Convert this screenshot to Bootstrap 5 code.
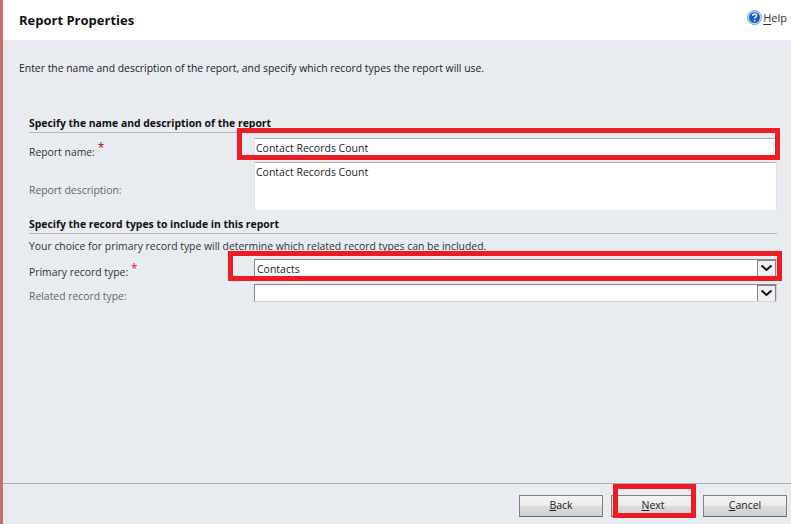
<!DOCTYPE html>
<html lang="en">
<head>
<meta charset="utf-8">
<title>Report Properties</title>
<link rel="stylesheet" href="https://cdn.jsdelivr.net/npm/bootstrap@5.3.0/dist/css/bootstrap.min.css">
<style>
html,body{height:100%;margin:0}
body{background:#e8ebf0;font-family:"Open Sans","Noto Sans",sans-serif;font-size:10.4px;color:#222;overflow:hidden;line-height:15px}
.wiz{height:524px;border-left:3px solid #cf6b6e;position:relative}
.wiz-head{height:40px;background:#fff;padding:0 4px 0 16px}
.wiz-title{font-size:13px;font-weight:700;color:#111;margin:0;line-height:40px}
.help-link{color:#333;text-decoration:none;font-size:11px;margin-top:-6px;gap:1px}
.help-link u{text-underline-offset:2px}
.intro{padding:21px 0 0 16px;height:76px;margin:0}
.form-area{padding:0 14px 0 26px}
.sec-head{font-size:10.4px;font-weight:700;color:#111;border-bottom:1px solid #b5b8bd;height:17px;line-height:15px;margin:0}
.sec-two{margin-top:6px}
.lab{width:225px;flex:none;color:#333}
.lab-a{padding-top:12px}
.lab-b{padding-top:21px}
.lab-c{padding-top:6px}
.lab-d{padding-top:5px}
.lab-dim{color:#666}
.req{color:#b80000;font-size:12px;line-height:11px;margin-left:3px;position:relative;top:-4px}
.req-hot{color:#ee1111;top:-3px}
.fld{flex:1;min-width:0}
.fld-a{padding-top:5px}
.txt.form-control{border-radius:0;border:1px solid;border-color:#abadb3 #e2e3ea #e3e9ef #e2e3ea;padding:1px 0 0 1px;font-size:10.5px;line-height:15px;color:#222;min-height:0;box-shadow:none;background:#fff}
.txt-one{height:18px}
.txt.txt-area{height:49px;resize:none;display:block;padding-top:2px}
.pick{border-radius:0;padding:2px 0 0 2px;font-size:10.5px;line-height:15px;height:18px;min-height:0;color:#222;border:1px solid #d5d5d5;border-top-color:#868686;border-left-color:#868686;display:block;
background:#fff url("data:image/svg+xml,%3Csvg xmlns='http://www.w3.org/2000/svg' width='19' height='17'%3E%3Crect x='.5' y='.5' width='18' height='16' fill='%23f0f0f0' stroke='%23868686'/%3E%3Cpath d='M4.500 5.500l5 4.500 5-4.500' fill='none' stroke='%23111' stroke-width='2'/%3E%3C/svg%3E") no-repeat right 0 top 0;background-size:19px 17px}
.choice-note{padding-top:5px;height:25px;color:#333;margin:0}
.rowline{display:flex}
.row-a{height:23px}
.row-b{height:49px;margin-top:6px}
.row-c{height:18px}
.row-gap-b{margin-top:7px}
.wiz-foot{position:absolute;left:0;right:0;top:483px;border-top:1px solid #aeb2b7;padding:11px 4px 0 0;gap:8px}
.act{width:84px;height:22px;padding:0 0 2px;border-radius:0;font-size:10.5px;line-height:15px;color:#222;border:1px solid #7f7f7f;border-bottom-color:#666;background:linear-gradient(#f3f3f3 0,#ececec 50%,#dddddd 51%,#cfcfcf 100%)}
.mark-box{position:absolute;border:5px solid #ed1c24;pointer-events:none}
.mb-1a{left:234px;top:128px;width:543px;height:32px}
.mb-2a{left:225px;top:251px;width:554px;height:30px}
.mb-3a{left:610px;top:484px;width:83px;height:34px}
</style>
</head>
<body>
<div class="wiz">
  <div class="wiz-head d-flex justify-content-between align-items-center">
    <h1 class="wiz-title">Report Properties</h1>
    <a class="help-link d-flex align-items-center" href="#">
      <svg width="15" height="15" viewBox="0 0 15 15" aria-hidden="true"><circle cx="7.500" cy="7.500" r="7" fill="#cfe0f5" stroke="#6f9bd8"/><circle cx="7.500" cy="7.500" r="5.500" fill="#1f5fc8"/><path d="M5.500 5.800c.2-1.200 1-1.800 2-1.800 1.200 0 2 .7 2 1.700 0 1.500-1.900 1.500-1.900 3" fill="none" stroke="#fff" stroke-width="1.400"/><rect x="6.900" y="10" width="1.400" height="1.500" fill="#fff"/></svg>
      <span><u>H</u>elp</span>
    </a>
  </div>
  <p class="intro">Enter the name and description of the report, and specify which record types the report will use.</p>
  <div class="form-area">
    <h2 class="sec-head">Specify the name and description of the report</h2>
    <div class="rowline row-a">
      <label class="lab lab-a" for="rn">Report name:<span class="req">*</span></label>
      <div class="fld fld-a"><input id="rn" class="form-control txt txt-one" value="Contact Records Count"></div>
    </div>
    <div class="rowline row-b">
      <label class="lab lab-dim lab-b" for="rd">Report description:</label>
      <div class="fld"><textarea id="rd" class="form-control txt txt-area">Contact Records Count</textarea></div>
    </div>
    <h2 class="sec-head sec-two">Specify the record types to include in this report</h2>
    <p class="choice-note">Your choice for primary record type will determine which related record types can be included.</p>
    <div class="rowline row-c">
      <label class="lab lab-c" for="pt">Primary record type:<span class="req req-hot">*</span></label>
      <div class="fld"><select id="pt" class="form-select pick"><option>Contacts</option></select></div>
    </div>
    <div class="rowline row-c row-gap-b">
      <label class="lab lab-dim lab-d" for="rt">Related record type:</label>
      <div class="fld"><select id="rt" class="form-select pick"><option></option></select></div>
    </div>
  </div>
  <div class="wiz-foot d-flex justify-content-end">
    <button class="btn act" type="button"><u>B</u>ack</button>
    <button class="btn act" type="button"><u>N</u>ext</button>
    <button class="btn act" type="button"><u>C</u>ancel</button>
  </div>
  <div class="mark-box mb-1a"></div>
  <div class="mark-box mb-2a"></div>
  <div class="mark-box mb-3a"></div>
</div>
<script src="https://cdn.jsdelivr.net/npm/bootstrap@5.3.0/dist/js/bootstrap.bundle.min.js"></script>
</body>
</html>
